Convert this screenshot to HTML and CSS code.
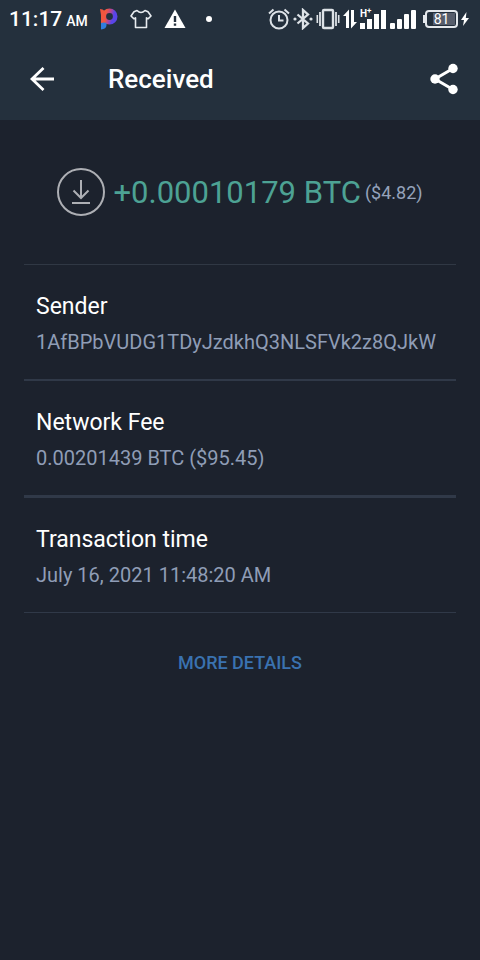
FILE: index.html
```html
<!DOCTYPE html>
<html lang="en">
<head>
<meta charset="utf-8">
<meta name="viewport" content="width=device-width, initial-scale=1">
<title>Received</title>
<link rel="stylesheet" href="styles.css">
</head>
<body>
<header class="top">
  <div class="status">
    <div class="status-left">
      <div class="clock"><span class="time">11:17</span><span class="ampm">AM</span></div>
      <svg class="logo" width="18" height="22" viewBox="0 0 18 22" aria-hidden="true">
        <defs>
          <linearGradient id="bowl" x1="0" y1="0" x2="1" y2="0.3"><stop offset="0.2" stop-color="#f4583f"/><stop offset="0.6" stop-color="#b0459c"/><stop offset="0.9" stop-color="#5a45e8"/></linearGradient>
        </defs>
        <circle cx="9.500" cy="8.500" r="5.700" fill="none" stroke="url(#bowl)" stroke-width="4.600"/>
        <path d="M0 1q3 0 4.500 2l1 5v6l-1 3H1V7Z" fill="#f0563f"/>
        <path d="M1 15q3-1 5.500 0v2q0 4-5.500 4.500Z" fill="#2f7ddf"/>
      </svg>
      <svg width="22" height="20" viewBox="0 0 22 20" fill="none" stroke="#e8ecf0" stroke-width="1.600" stroke-linejoin="round" aria-hidden="true"><path d="M7 1.500q4 4 8 0l3 1.200L21 7l-3 2.800-1.500-1V18.500h-11V8.800L4 9.800 1 7l3-4.300Z"/></svg>
      <svg width="22" height="20" viewBox="0 0 22 20" aria-hidden="true"><path d="M11 0.500 21.500 19H.500Z" fill="#fff"/><path d="M9.800 7h2.400v6H9.800zM9.800 14.500h2.400v2.300H9.800z" fill="#24303e"/></svg>
      <svg class="dot" width="6" height="6" viewBox="0 0 6 6" aria-hidden="true"><circle cx="3" cy="3" r="3" fill="#fff"/></svg>
    </div>
    <div class="status-right">
      <svg width="22" height="22" viewBox="0 0 22 22" fill="none" stroke="#dde2e7" stroke-width="2" aria-hidden="true"><circle cx="11" cy="12" r="8.500"/><path d="M11 7v5.500h4.500M1 5.500 5.500 1.500M21 5.500 16.500 1.500"/></svg>
      <svg width="20" height="22" viewBox="0 0 20 22" fill="none" stroke="#dde2e7" stroke-width="2.300" aria-hidden="true"><path d="M4.500 6.500 15 15.500l-5 4.500V2l5 4.500L4.500 15.500"/><circle cx="2" cy="11" r="1.600" fill="#dde2e7" stroke="none"/><circle cx="18" cy="11" r="1.600" fill="#dde2e7" stroke="none"/></svg>
      <svg width="24" height="22" viewBox="0 0 24 22" fill="none" stroke="#dde2e7" aria-hidden="true"><rect x="7" y="2" width="10" height="18" rx="1" stroke-width="2.400"/><path d="M4 4v14M20 4v14" stroke-width="1.800"/><path d="M1.300 7v8M22.700 7v8" stroke-width="1.600"/></svg>
      <svg class="data" width="14" height="20" viewBox="0 0 14 20" fill="#fff" aria-hidden="true"><path d="M3 19V7H0L6 .500V19ZM8 1h3v12h3L8 19.500Z"/></svg>
      <div class="signal">
        <span class="net">H<sup>+</sup></span>
        <svg width="26" height="20" viewBox="0 0 26 20" fill="#fff" aria-hidden="true"><path d="M0 14h5v6H0zM7 10h5v10H7zM14 5h5v15h-5zM21 1h5v19h-5z"/></svg>
      </div>
      <svg class="bars" width="26" height="20" viewBox="0 0 26 20" fill="#fff" aria-hidden="true"><rect y="14" width="5" height="6" rx="1"/><rect x="7" y="10" width="5" height="10" rx="1"/><rect x="14" y="5" width="5" height="15" rx="1"/><rect x="21" y="1" width="5" height="19" rx="1"/></svg>
      <div class="battery"><span class="charge">81</span></div>
      <svg class="bolt" width="8" height="14" viewBox="0 0 8 14" aria-hidden="true"><path d="M5.500 0 0 8h3L2 14l6-8H4.800Z" fill="#fff"/></svg>
    </div>
  </div>
  <div class="appbar">
    <button class="icon-button" type="button" aria-label="Back">
      <svg width="24" height="24" viewBox="0 0 24 24" fill="none" stroke="#fff" stroke-width="2.800" aria-hidden="true"><path d="M24 12H2M13.500 1 2 12l11.500 11"/></svg>
    </button>
    <h1>Received</h1>
    <button class="icon-button share" type="button" aria-label="Share">
      <svg width="28" height="32" viewBox="0 0 28 32" fill="#fff" aria-hidden="true"><path d="M23 5.500 5 16l18 10.500" fill="none" stroke="#fff" stroke-width="3"/><circle cx="23" cy="5.500" r="4.700"/><circle cx="5" cy="16" r="4.700"/><circle cx="23" cy="26.500" r="4.700"/></svg>
    </button>
  </div>
</header>
<main>
  <section class="amount">
    <svg width="48" height="48" viewBox="0 0 48 48" fill="none" stroke="#adafb4" stroke-width="2" aria-hidden="true"><circle cx="24" cy="24" r="23"/><path d="M24 12v18M16.500 22.500 24 30l7.500-7.500M15 35h18"/></svg>
    <p><span class="btc">+0.00010179 BTC</span><span class="usd">($4.82)</span></p>
  </section>
  <dl>
    <div class="row"><dt>Sender</dt><dd>1AfBPbVUDG1TDyJzdkhQ3NLSFVk2z8QJkW</dd></div>
    <div class="row heavy"><dt>Network Fee</dt><dd>0.00201439 BTC ($95.45)</dd></div>
    <div class="row"><dt>Transaction time</dt><dd>July 16, 2021 11:48:20 AM</dd></div>
  </dl>
  <a class="more" href="#details">MORE DETAILS</a>
</main>
</body>
</html>
```
FILE: styles.css
```css
* { box-sizing: border-box; margin: 0; padding: 0; }

body {
  min-height: 100vh;
  background: #1c222d;
  color: #fff;
  font-family: Roboto, "Liberation Sans", sans-serif;
}

svg { display: block; flex: none; }

.top { background: #24303d; }

.status {
  display: flex;
  justify-content: space-between;
  align-items: center;
  height: 37px;
  padding: 0 11px 0 9px;
}

.status-left, .status-right { display: flex; align-items: center; }
.status-left { gap: 12px; }
.status-right { gap: 3px; }

.clock { display: flex; align-items: baseline; gap: 4px; }
.time { font-size: 21px; font-weight: 500; }
.ampm { font-size: 14px; font-weight: 500; }
.dot { margin-left: 8px; }

.signal { position: relative; }
.net {
  position: absolute;
  left: 0;
  top: -2px;
  font-size: 10px;
  line-height: 10px;
  font-weight: 700;
}
.net sup { font-size: 8px; line-height: 1; }
.bars { margin-left: 1px; }

.battery {
  position: relative;
  display: flex;
  width: 33px;
  height: 18px;
  margin-left: 6px;
  padding: 1px;
  border: 2px solid #e4e8ec;
  border-radius: 4px;
}
.battery::before {
  content: "";
  position: absolute;
  left: -4px;
  top: 3px;
  width: 2px;
  height: 8px;
  background: #e4e8ec;
}
.charge {
  flex: 1;
  background: linear-gradient(90deg, transparent 20%, #565d6b 20%);
  font-size: 14px;
  line-height: 12px;
  text-align: center;
}

.appbar {
  display: flex;
  align-items: center;
  height: 83px;
  padding: 0 20px 0 28px;
}
.icon-button {
  display: flex;
  padding: 2px;
  border: 0;
  background: none;
}
h1 {
  flex: 1;
  margin-left: 52px;
  font-size: 26px;
  line-height: 32px;
  font-weight: 500;
}

main { padding: 0 24px; text-align: center; }

.amount {
  display: flex;
  justify-content: center;
  align-items: center;
  gap: 8px;
  height: 144px;
}
.amount p { display: flex; align-items: center; gap: 4px; }
.btc { color: #4da294; font-size: 31px; }
.usd { color: #95a3bb; font-size: 18px; }

dl { border-top: 1px solid #303844; text-align: left; }
.row {
  padding: 25px 12px 19px;
  border-bottom: 2px solid #303948;
}
.heavy { border-bottom-width: 3px; }
.row:last-child { border-bottom-width: 1px; }
dt { font-size: 23px; line-height: 34px; }
dd { color: #8f9db6; font-size: 20px; line-height: 36px; }

.more {
  display: inline-block;
  margin-top: 38px;
  color: #3a72b0;
  font-size: 18px;
  line-height: 24px;
  font-weight: 500;
  text-decoration: none;
}
```
